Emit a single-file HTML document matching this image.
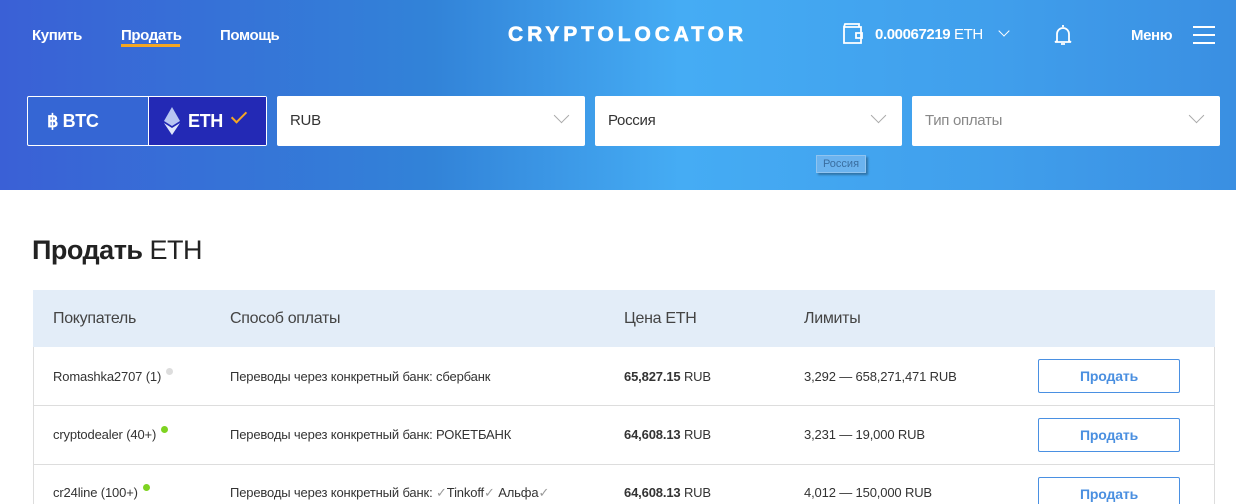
<!DOCTYPE html>
<html><head><meta charset="utf-8"><style>
*{margin:0;padding:0;box-sizing:border-box}
html,body{width:1236px;height:504px;overflow:hidden}
body{background:#fff;font-family:"Liberation Sans",sans-serif;color:#333;position:relative}
.hdr{position:absolute;left:0;top:0;width:1236px;height:190px;background:linear-gradient(90deg,#3a60d6 0%,#3283d8 35%,#45acf4 55%,#409fec 80%,#3a8fe2 100%)}
.a{position:absolute;color:#fff;font-size:15px;font-weight:bold;letter-spacing:-0.4px}
.logo{position:absolute;left:508px;top:23px;color:#fff;font-size:21px;font-weight:bold;letter-spacing:3.9px;white-space:nowrap;-webkit-text-stroke:0.6px #fff}
.sel{position:absolute;top:96px;height:50px;background:#fff;border-radius:2px;font-size:15px;padding:16px 13px;color:#333;letter-spacing:-0.3px}
.chev{position:absolute;right:18px;top:14px;width:11px;height:11px;border-right:1.5px solid #aaa;border-bottom:1.5px solid #aaa;transform:rotate(45deg)}
.tbl{position:absolute;left:33px;top:290px;width:1182px}
.th{height:57px;background:#e3edf8;position:relative;font-size:16px;color:#444;letter-spacing:-0.3px}
.th span,.row span{position:absolute;white-space:nowrap}
.row{height:59px;border-bottom:1px solid #ddd;position:relative;font-size:13px;color:#333;border-right:1px solid #ddd;border-left:1px solid #ddd;letter-spacing:-0.15px}
.btn{position:absolute;left:1004px;top:12px;width:142px;height:34px;border:1px solid #4a90e2;border-radius:2px;color:#4a8fe0;font-weight:bold;font-size:14px;text-align:center;line-height:32px}
.dot{display:inline-block;width:7px;height:7px;border-radius:50%;position:relative;top:-6px;margin-left:5px}
.ck{color:#999}
</style></head><body>
<div class="hdr">
<div class="a" style="left:32px;top:27px">Купить</div>
<div class="a" style="left:121px;top:27px">Продать</div>
<div style="position:absolute;left:121px;top:44px;width:59px;height:3px;background:#f5a623"></div>
<div class="a" style="left:220px;top:27px">Помощь</div>
<div class="logo">CRYPTOLOCATOR</div>
<svg style="position:absolute;left:842px;top:23px" width="24" height="22" viewBox="0 0 24 22" fill="none" stroke="#fff" stroke-width="1.8"><path d="M2 4h17v16H2zM2 4l1-3h14v3M14 10h6v5h-6z"/></svg>
<div class="a" style="left:875px;top:26px">0.00067219 <span style="font-weight:normal">ETH</span></div>
<div style="position:absolute;left:1000px;top:27px;width:8px;height:8px;border-right:1.5px solid #fff;border-bottom:1.5px solid #fff;transform:rotate(45deg)"></div>
<svg style="position:absolute;left:1053px;top:23px" width="20" height="24" viewBox="0 0 20 24" fill="none" stroke="#fff" stroke-width="1.8"><path d="M10 2v2M4 18V11a6 6 0 0112 0v7l2 1H2zM8 21h4"/></svg>
<div class="a" style="left:1131px;top:27px">Меню</div>
<div style="position:absolute;left:1193px;top:26px;width:22px;height:2px;background:#fff;box-shadow:0 8px 0 #fff,0 16px 0 #fff"></div>
<div style="position:absolute;left:27px;top:96px;width:240px;height:50px;border:1px solid #fff;border-radius:2px;background:#3566d4"></div>
<div style="position:absolute;left:148px;top:97px;width:118px;height:48px;background:#2329b5;border-left:1px solid #fff"></div>
<div class="a" style="left:47px;top:111px;font-size:18px">฿ BTC</div>
<svg style="position:absolute;left:164px;top:107px" width="16" height="28" viewBox="0 0 16 28"><path d="M8 0L0 14l8 5 8-5z" fill="#b8c6f2"/><path d="M0 16l8 12 8-12-8 5z" fill="#e0e7fb"/></svg>
<div class="a" style="left:188px;top:111px;font-size:18px">ETH</div>
<div style="position:absolute;left:235px;top:108px;width:8px;height:15px;border-right:2.5px solid #f5a623;border-bottom:2.5px solid #f5a623;transform:rotate(45deg)"></div>
<div class="sel" style="left:277px;width:308px">RUB<div class="chev"></div></div>
<div class="sel" style="left:595px;width:307px">Россия<div class="chev"></div></div>
<div class="sel" style="left:912px;width:308px;color:#888">Тип оплаты<div class="chev"></div></div>
<div style="position:absolute;left:816px;top:155px;width:50px;height:18px;background:#6bb3ef;border:1px solid #90c4f0;box-shadow:2px 2px 2px rgba(0,0,0,.3);font-size:11px;color:#3a6ea0;text-align:center;line-height:16px">Россия</div>
</div>
<div style="position:absolute;left:32px;top:235px;font-size:27px;color:#222;letter-spacing:-0.5px"><b>Продать</b> ETH</div>
<div class="tbl">
<div class="th"><span style="left:20px;top:20px">Покупатель</span><span style="left:197px;top:20px">Способ оплаты</span><span style="left:591px;top:20px">Цена ETH</span><span style="left:771px;top:20px">Лимиты</span></div>
<div class="row"><span style="left:19px;top:22px">Romashka2707 (1)<i class="dot" style="background:#ddd"></i></span><span style="left:196px;top:22px">Переводы через конкретный банк: сбербанк</span><span style="left:590px;top:22px"><b>65,827.15</b> RUB</span><span style="left:770px;top:22px">3,292 — 658,271,471 RUB</span><div class="btn">Продать</div></div>
<div class="row"><span style="left:19px;top:21px">cryptodealer (40+)<i class="dot" style="background:#7ed321"></i></span><span style="left:196px;top:21px">Переводы через конкретный банк: РОКЕТБАНК</span><span style="left:590px;top:21px"><b>64,608.13</b> RUB</span><span style="left:770px;top:21px">3,231 — 19,000 RUB</span><div class="btn">Продать</div></div>
<div class="row"><span style="left:19px;top:20px">cr24line (100+)<i class="dot" style="background:#7ed321"></i></span><span style="left:196px;top:20px">Переводы через конкретный банк: <span class="ck" style="position:static">✓</span>Tinkoff<span class="ck" style="position:static">✓</span> Альфа<span class="ck" style="position:static">✓</span></span><span style="left:590px;top:20px"><b>64,608.13</b> RUB</span><span style="left:770px;top:20px">4,012 — 150,000 RUB</span><div class="btn">Продать</div></div>
</div>
</body></html>
